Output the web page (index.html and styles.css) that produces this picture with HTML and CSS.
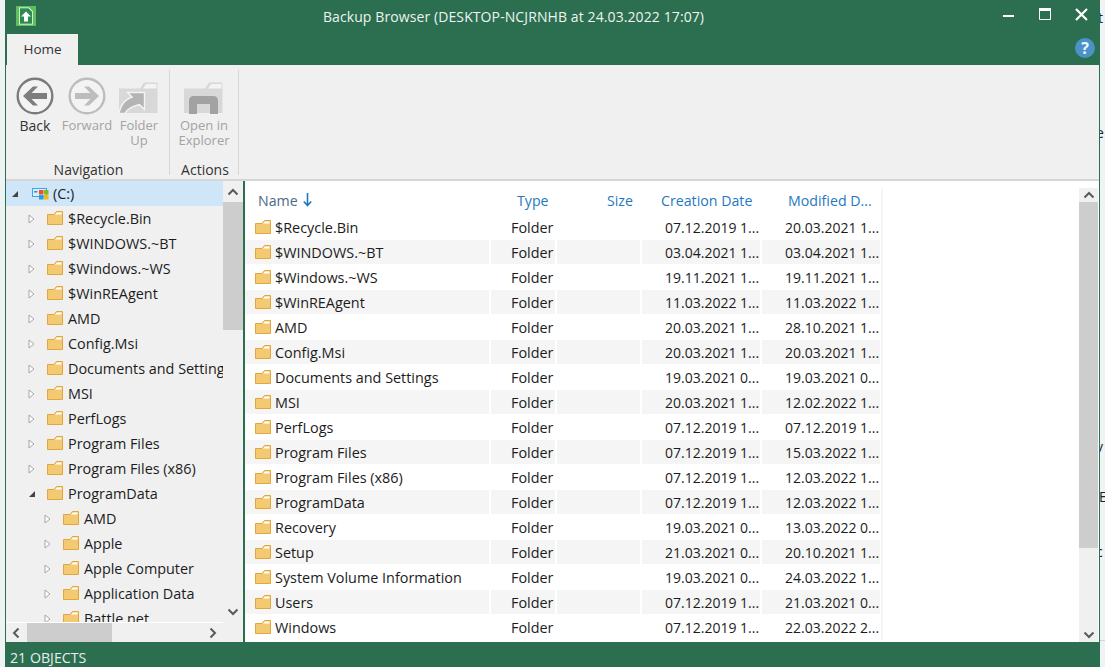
FILE: index.html
```html
<!DOCTYPE html>
<html lang="en">
<head>
<meta charset="utf-8">
<title>Backup Browser</title>
<link rel="stylesheet" href="styles.css">
</head>
<body>
<svg class="defs" width="0" height="0" aria-hidden="true">
  <symbol id="folder" viewBox="0 0 16 14">
    <path d="M.5 3.500V13.500H15.500V.5H9.500L7 3.500Z" fill="#f3ca72" stroke="#e2a63c"/>
    <path d="M8 3.500 10 1.500H14.500V3.500Z" fill="#fff" stroke="none"/>
  </symbol>
  <symbol id="tri" viewBox="0 0 7 10">
    <path d="M1 1 6 5 1 9Z" fill="#fff" stroke="#a6a6a6"/>
  </symbol>
  <symbol id="tri-open" viewBox="0 0 8 8">
    <path d="M7 1V7H1Z" fill="#444"/>
  </symbol>
</svg>
<div class="window">
  <header class="titlebar">
    <svg class="app-icon" viewBox="0 0 20 20" width="20" height="20">
      <rect width="20" height="20" fill="#5bc158"/>
      <path d="M3 1.500H13L17 5.500V18.500H3Z" fill="#fff"/>
      <path d="M3.800 2.300H12.600L16.200 5.900V17.700H3.800Z" fill="#2e8a52"/>
      <path d="M10 5.500 15 10.500H12V15.500H8V10.500H5Z" fill="#fff"/>
    </svg>
    <div class="title">Backup Browser (DESKTOP-NCJRNHB at 24.03.2022 17:07)</div>
    <div class="win-buttons">
      <svg class="win-btn win-min" width="11" height="4" viewBox="0 0 11 4"><rect y="1" width="11" height="2" fill="#fff"/></svg>
      <svg class="win-btn" width="13" height="13" viewBox="0 0 13 13"><path d="M.5.5H11.500V11.500H.5Z" fill="none" stroke="#fff"/><rect x="0" y="0" width="12" height="3" fill="#fff"/></svg>
      <svg class="win-btn" width="13" height="13" viewBox="0 0 13 13"><path d="M1 1 12 12M12 1 1 12" stroke="#fff" stroke-width="2.200"/></svg>
    </div>
  </header>
  <div class="tabbar">
    <div class="tab">Home</div>
    <div class="help">?</div>
  </div>
  <section class="ribbon">
    <div class="group group-nav">
      <div class="group-items">
        <div class="rbtn rbtn-back">
          <svg width="38" height="38" viewBox="0 0 38 38"><circle cx="19" cy="19" r="17.300" fill="#f3f3f3" stroke="#7b7b7b" stroke-width="2.400"/><path d="M7 19 17 9.500H22L15.500 16H31V22H15.500L22 28.500H17Z" fill="#7d7d7d"/></svg>
          <span>Back</span>
        </div>
        <div class="rbtn rbtn-fwd off">
          <svg width="38" height="38" viewBox="0 0 38 38"><circle cx="19" cy="19" r="17.300" fill="#f3f3f3" stroke="#bdbdbd" stroke-width="2.400"/><path d="M31 19 21 9.500H16L22.500 16H7V22H22.500L16 28.500H21Z" fill="#bdbdbd"/></svg>
          <span>Forward</span>
        </div>
        <div class="rbtn rbtn-up off">
          <svg width="40" height="32" viewBox="0 0 40 32"><path d="M0 6.500H21L25 .5H38.500V31H0Z" fill="#d8d8d8"/><path d="M24 6.500 27 2H37.500V6.500Z" fill="#f3f3f3"/><path d="M0 30.500C2 22 7 17 13 15L8.500 10.500H25.500V27.500L20.500 22.500C14 24 8 27 6 31.500H0Z" fill="#b4b4b4" stroke="#f4f4f4" stroke-width="1.400"/></svg>
          <span>Folder<br>Up</span>
        </div>
      </div>
      <div class="group-label">Navigation</div>
    </div>
    <div class="group group-act">
      <div class="group-items">
        <div class="rbtn rbtn-open off">
          <svg width="40" height="32" viewBox="0 0 40 32"><path d="M0 6.500H21L25 .5H38.500V31H0Z" fill="#d8d8d8"/><path d="M24 6.500 27 2H37.500V6.500Z" fill="#f3f3f3"/><path d="M5 32V19Q5 14 10 14H29Q34 14 34 19V32H26V22H13V32Z" fill="#a2a2a2"/></svg>
          <span>Open in<br>Explorer</span>
        </div>
      </div>
      <div class="group-label">Actions</div>
    </div>
    <div class="group group-rest"></div>
  </section>
  <main class="panes">
    <aside class="treepane">
      <div class="treecol">
        <div class="tree">
          <div class="node sel"><svg class="arrow" width="8" height="8"><use href="#tri-open"/></svg><svg class="drive" width="17" height="12" viewBox="0 0 17 12"><rect x=".5" y=".5" width="14" height="8" fill="#d8eefb" stroke="#4aa3dc"/><rect x="2" y="3" width="3.500" height="1.500" fill="#3c8fcb"/><rect x="7" y="2" width="4.500" height="4.500" fill="#e8542c"/><rect x="12" y="2" width="4.500" height="4.500" fill="#7fba2a"/><rect x="7" y="7" width="4.500" height="4.500" fill="#2d9be0"/><rect x="12" y="7" width="4.500" height="4.500" fill="#f7b91a"/></svg><span>(C:)</span></div>
          <div class="node lv1"><svg class="arrow" width="7" height="10"><use href="#tri"/></svg><svg class="ficon" width="16" height="14"><use href="#folder"/></svg><span>$Recycle.Bin</span></div>
          <div class="node lv1"><svg class="arrow" width="7" height="10"><use href="#tri"/></svg><svg class="ficon" width="16" height="14"><use href="#folder"/></svg><span>$WINDOWS.~BT</span></div>
          <div class="node lv1"><svg class="arrow" width="7" height="10"><use href="#tri"/></svg><svg class="ficon" width="16" height="14"><use href="#folder"/></svg><span>$Windows.~WS</span></div>
          <div class="node lv1"><svg class="arrow" width="7" height="10"><use href="#tri"/></svg><svg class="ficon" width="16" height="14"><use href="#folder"/></svg><span>$WinREAgent</span></div>
          <div class="node lv1"><svg class="arrow" width="7" height="10"><use href="#tri"/></svg><svg class="ficon" width="16" height="14"><use href="#folder"/></svg><span>AMD</span></div>
          <div class="node lv1"><svg class="arrow" width="7" height="10"><use href="#tri"/></svg><svg class="ficon" width="16" height="14"><use href="#folder"/></svg><span>Config.Msi</span></div>
          <div class="node lv1"><svg class="arrow" width="7" height="10"><use href="#tri"/></svg><svg class="ficon" width="16" height="14"><use href="#folder"/></svg><span>Documents and Settings</span></div>
          <div class="node lv1"><svg class="arrow" width="7" height="10"><use href="#tri"/></svg><svg class="ficon" width="16" height="14"><use href="#folder"/></svg><span>MSI</span></div>
          <div class="node lv1"><svg class="arrow" width="7" height="10"><use href="#tri"/></svg><svg class="ficon" width="16" height="14"><use href="#folder"/></svg><span>PerfLogs</span></div>
          <div class="node lv1"><svg class="arrow" width="7" height="10"><use href="#tri"/></svg><svg class="ficon" width="16" height="14"><use href="#folder"/></svg><span>Program Files</span></div>
          <div class="node lv1"><svg class="arrow" width="7" height="10"><use href="#tri"/></svg><svg class="ficon" width="16" height="14"><use href="#folder"/></svg><span>Program Files (x86)</span></div>
          <div class="node lv1 open"><svg class="arrow" width="8" height="8"><use href="#tri-open"/></svg><svg class="ficon" width="16" height="14"><use href="#folder"/></svg><span>ProgramData</span></div>
          <div class="node lv2"><svg class="arrow" width="7" height="10"><use href="#tri"/></svg><svg class="ficon" width="16" height="14"><use href="#folder"/></svg><span>AMD</span></div>
          <div class="node lv2"><svg class="arrow" width="7" height="10"><use href="#tri"/></svg><svg class="ficon" width="16" height="14"><use href="#folder"/></svg><span>Apple</span></div>
          <div class="node lv2"><svg class="arrow" width="7" height="10"><use href="#tri"/></svg><svg class="ficon" width="16" height="14"><use href="#folder"/></svg><span>Apple Computer</span></div>
          <div class="node lv2"><svg class="arrow" width="7" height="10"><use href="#tri"/></svg><svg class="ficon" width="16" height="14"><use href="#folder"/></svg><span>Application Data</span></div>
          <div class="node lv2"><svg class="arrow" width="7" height="10"><use href="#tri"/></svg><svg class="ficon" width="16" height="14"><use href="#folder"/></svg><span>Battle.net</span></div>
        </div>
        <div class="hscroll">
          <svg class="chev" width="10" height="12" viewBox="0 0 10 12"><path d="M7.500 1.500 3 6 7.500 10.500" fill="none" stroke="#5a5a5a" stroke-width="2"/></svg>
          <div class="hthumb"></div>
          <svg class="chev chev-right" width="10" height="12" viewBox="0 0 10 12"><path d="M2.500 1.500 7 6 2.500 10.500" fill="none" stroke="#5a5a5a" stroke-width="2"/></svg>
        </div>
      </div>
      <div class="vscroll tree-v">
        <div class="sb-btn"><svg width="12" height="8" viewBox="0 0 12 8"><path d="M1.500 6.500 6 2 10.500 6.500" fill="none" stroke="#5a5a5a" stroke-width="2"/></svg></div>
        <div class="thumb tree-thumb"></div>
        <div class="sb-fill"></div>
        <div class="sb-btn"><svg width="12" height="8" viewBox="0 0 12 8"><path d="M1.500 1.500 6 6 10.500 1.500" fill="none" stroke="#5a5a5a" stroke-width="2"/></svg></div>
        <div class="corner"></div>
      </div>
    </aside>
    <section class="listpane">
      <div class="list">
        <div class="lrow lhead">
          <div class="hname">Name <svg width="9" height="14" viewBox="0 0 9 14"><path d="M4.500 0V12M.8 8.500 4.500 12.500 8.200 8.500" fill="none" stroke="#1f78c1" stroke-width="1.600"/></svg></div>
          <div class="htype">Type</div>
          <div class="hsize">Size</div>
          <div class="hcreated">Creation Date</div>
          <div class="hmod">Modified D...</div>
        </div>
        <div class="lrow"><div class="cname"><svg width="16" height="14"><use href="#folder"/></svg><span>$Recycle.Bin</span></div><div class="ctype">Folder</div><div class="csize"></div><div class="cdate">07.12.2019 1...</div><div class="cdate">20.03.2021 1...</div></div>
        <div class="lrow"><div class="cname"><svg width="16" height="14"><use href="#folder"/></svg><span>$WINDOWS.~BT</span></div><div class="ctype">Folder</div><div class="csize"></div><div class="cdate">03.04.2021 1...</div><div class="cdate">03.04.2021 1...</div></div>
        <div class="lrow"><div class="cname"><svg width="16" height="14"><use href="#folder"/></svg><span>$Windows.~WS</span></div><div class="ctype">Folder</div><div class="csize"></div><div class="cdate">19.11.2021 1...</div><div class="cdate">19.11.2021 1...</div></div>
        <div class="lrow"><div class="cname"><svg width="16" height="14"><use href="#folder"/></svg><span>$WinREAgent</span></div><div class="ctype">Folder</div><div class="csize"></div><div class="cdate">11.03.2022 1...</div><div class="cdate">11.03.2022 1...</div></div>
        <div class="lrow"><div class="cname"><svg width="16" height="14"><use href="#folder"/></svg><span>AMD</span></div><div class="ctype">Folder</div><div class="csize"></div><div class="cdate">20.03.2021 1...</div><div class="cdate">28.10.2021 1...</div></div>
        <div class="lrow"><div class="cname"><svg width="16" height="14"><use href="#folder"/></svg><span>Config.Msi</span></div><div class="ctype">Folder</div><div class="csize"></div><div class="cdate">20.03.2021 1...</div><div class="cdate">20.03.2021 1...</div></div>
        <div class="lrow"><div class="cname"><svg width="16" height="14"><use href="#folder"/></svg><span>Documents and Settings</span></div><div class="ctype">Folder</div><div class="csize"></div><div class="cdate">19.03.2021 0...</div><div class="cdate">19.03.2021 0...</div></div>
        <div class="lrow"><div class="cname"><svg width="16" height="14"><use href="#folder"/></svg><span>MSI</span></div><div class="ctype">Folder</div><div class="csize"></div><div class="cdate">20.03.2021 1...</div><div class="cdate">12.02.2022 1...</div></div>
        <div class="lrow"><div class="cname"><svg width="16" height="14"><use href="#folder"/></svg><span>PerfLogs</span></div><div class="ctype">Folder</div><div class="csize"></div><div class="cdate">07.12.2019 1...</div><div class="cdate">07.12.2019 1...</div></div>
        <div class="lrow"><div class="cname"><svg width="16" height="14"><use href="#folder"/></svg><span>Program Files</span></div><div class="ctype">Folder</div><div class="csize"></div><div class="cdate">07.12.2019 1...</div><div class="cdate">15.03.2022 1...</div></div>
        <div class="lrow"><div class="cname"><svg width="16" height="14"><use href="#folder"/></svg><span>Program Files (x86)</span></div><div class="ctype">Folder</div><div class="csize"></div><div class="cdate">07.12.2019 1...</div><div class="cdate">12.03.2022 1...</div></div>
        <div class="lrow"><div class="cname"><svg width="16" height="14"><use href="#folder"/></svg><span>ProgramData</span></div><div class="ctype">Folder</div><div class="csize"></div><div class="cdate">07.12.2019 1...</div><div class="cdate">12.03.2022 1...</div></div>
        <div class="lrow"><div class="cname"><svg width="16" height="14"><use href="#folder"/></svg><span>Recovery</span></div><div class="ctype">Folder</div><div class="csize"></div><div class="cdate">19.03.2021 0...</div><div class="cdate">13.03.2022 0...</div></div>
        <div class="lrow"><div class="cname"><svg width="16" height="14"><use href="#folder"/></svg><span>Setup</span></div><div class="ctype">Folder</div><div class="csize"></div><div class="cdate">21.03.2021 0...</div><div class="cdate">20.10.2021 1...</div></div>
        <div class="lrow"><div class="cname"><svg width="16" height="14"><use href="#folder"/></svg><span>System Volume Information</span></div><div class="ctype">Folder</div><div class="csize"></div><div class="cdate">19.03.2021 0...</div><div class="cdate">24.03.2022 1...</div></div>
        <div class="lrow"><div class="cname"><svg width="16" height="14"><use href="#folder"/></svg><span>Users</span></div><div class="ctype">Folder</div><div class="csize"></div><div class="cdate">07.12.2019 1...</div><div class="cdate">21.03.2021 0...</div></div>
        <div class="lrow"><div class="cname"><svg width="16" height="14"><use href="#folder"/></svg><span>Windows</span></div><div class="ctype">Folder</div><div class="csize"></div><div class="cdate">07.12.2019 1...</div><div class="cdate">22.03.2022 2...</div></div>
      </div>
      <div class="vscroll list-v">
        <div class="sb-btn"><svg width="12" height="8" viewBox="0 0 12 8"><path d="M1.500 6.500 6 2 10.500 6.500" fill="none" stroke="#5a5a5a" stroke-width="2"/></svg></div>
        <div class="thumb list-thumb"></div>
        <div class="sb-fill"></div>
        <div class="sb-btn"><svg width="12" height="8" viewBox="0 0 12 8"><path d="M1.500 1.500 6 6 10.500 1.500" fill="none" stroke="#5a5a5a" stroke-width="2"/></svg></div>
      </div>
    </section>
  </main>
  <footer class="status">21 OBJECTS</footer>
</div>
<div class="behind">
  <span class="peek p1">t</span>
  <span class="peek p2">e</span>
  <span class="peek p3">v</span>
  <span class="peek p4">E</span>
  <span class="peek p5">c</span>
  <span class="peek-line"></span>
</div>
</body>
</html>
```
FILE: styles.css
```css
* { box-sizing: border-box; }
html, body { margin: 0; height: 100%; overflow: hidden; }
body {
  background: #eef4f3;
  font-family: "Open Sans", "Noto Sans", sans-serif;
  font-size: 14.4px;
  color: #1c1c1c;
  display: flex;
}
.defs { position: absolute; width: 0; height: 0; }
.window {
  flex: none;
  width: 1095px;
  height: 667px;
  margin-left: 5px;
  border-left: 1px solid #2b6e50;
  border-right: 1px solid #2b6e50;
  display: flex;
  flex-direction: column;
  background: #fff;
}
.behind {
  flex: 1;
  min-width: 0;
  overflow: hidden;
  display: flex;
  flex-direction: column;
  font-size: 14px;
  line-height: 18px;
  color: #222;
}
.peek { height: 18px; flex: none; margin-left: -2px; }
.p1 { margin-top: 9px; }
.p2 { margin-top: 97px; margin-left: -4px; }
.p3 { margin-top: 296px; margin-left: -4px; }
.p4 { margin-top: 32px; margin-left: -1px; }
.p5 { margin-top: 37px; margin-left: -4px; }
.peek-line { height: 1px; background: #cfd6d4; margin-top: 79px; flex: none; }
.titlebar {
  height: 34px;
  background: #2b6e50;
  display: flex;
  align-items: flex-start;
  color: #fff;
}
.app-icon { margin: 6px 0 0 10px; flex: none; }
.title {
  flex: 1;
  text-align: center;
  padding: 6px 0 0 0;
  font-size: 14px;
  color: #eef4f1;
  margin-left: -12px;
  line-height: 21px;
  letter-spacing: .1px;
}
.win-buttons { display: flex; align-items: center; height: 28px; padding-right: 11px; gap: 23px; }
.win-min { margin-top: 4px; margin-right: 2px; }
.tabbar {
  height: 31px;
  background: #2b6e50;
  display: flex;
  justify-content: space-between;
  padding: 0 4px 0 1px;
}
.tab {
  width: 71px;
  background: #f0f0f0;
  text-align: center;
  line-height: 30px;
  font-size: 13.5px;
  color: #333;
}
.help {
  width: 20px;
  height: 20px;
  margin-top: 4px;
  border-radius: 50%;
  background: #4a92c8;
  color: #f2f7fb;
  font-weight: 700;
  font-size: 16px;
  line-height: 20px;
  text-align: center;
}
.ribbon {
  height: 116px;
  background: #f0f0f0;
  border-bottom: 2px solid #d6d6d6;
  display: flex;
  padding-top: 5px;
}
.group { display: flex; flex-direction: column; height: 105px; border-right: 1px solid #d6d6d6; }
.group-nav { width: 164px; }
.group-act { width: 69px; }
.group-rest { flex: 1; border-right: 0; }
.group-items { flex: 1; display: flex; }
.group-label { text-align: center; font-size: 14px; line-height: 25px; color: #333; height: 18px; padding-left: 2px; }
.rbtn {
  display: flex;
  flex-direction: column;
  align-items: center;
  font-size: 13px;
  line-height: 15px;
  text-align: center;
  color: #333;
  width: 52px;
}
.rbtn svg { display: block; height: 38px; margin-top: 7px; margin-bottom: 3px; }
.rbtn-up svg, .rbtn-open svg { margin-top: 12px; height: 32px; margin-bottom: 4px; }
.off { color: #a3a3a3; }
.rbtn-back { margin-left: 3px; font-size: 14px; }
.rbtn-open { width: 68px; }
.panes { flex: 1; display: flex; min-height: 0; }
.treepane { width: 239px; flex: none; display: flex; background: #f0f0f0; border-right: 2px solid #2b6e50; }
.treecol { flex: 1; min-width: 0; display: flex; flex-direction: column; }
.tree { height: 441px; overflow: hidden; }
.node {
  height: 25px;
  display: flex;
  align-items: center;
  white-space: nowrap;
}
.node span { margin-top: -1px; }
.node.sel { background: #cfe5f8; }
.arrow { flex: none; margin-left: 22px; margin-right: 12px; }
.open .arrow { margin-right: 11px; }
.sel .arrow { margin-left: 5px; margin-right: 13px; }
.drive { flex: none; margin-right: 4px; }
.ficon { flex: none; margin-right: 5px; margin-top: -2px; }
.lv2 { padding-left: 16px; }
.hscroll { height: 20px; display: flex; align-items: center; border-top: 1px solid #fff; }
.chev { flex: none; margin-left: 5px; }
.hthumb { width: 85px; height: 19px; background: #cdcdcd; margin-left: 6px; }
.chev-right { margin-left: auto; margin-right: 5px; }
.vscroll { display: flex; flex-direction: column; background: #f0f0f0; flex: none; }
.tree-v { width: 20px; }
.sb-btn { height: 21px; display: flex; align-items: center; justify-content: center; flex: none; }
.thumb { background: #cdcdcd; flex: none; }
.tree-thumb { height: 128px; }
.sb-fill { flex: 1; }
.corner { height: 20px; background: #f0f0f0; flex: none; }
.listpane { flex: 1; min-width: 0; display: flex; background: #fff; }
.list { flex: 1; min-width: 0; overflow: hidden; }
.lrow {
  display: grid;
  grid-template-columns: 244px 64px 83px 118px 118px;
  column-gap: 2px;
  height: 25px;
  align-items: stretch;
  width: 638px;
  border-right: 2px solid #f6f6f6;
}
.lrow > div { display: flex; align-items: center; height: 24px; white-space: nowrap; }
.lrow:nth-child(odd):not(.lhead) > div { background: #f5f5f5; }
.lhead { height: 27px; margin-top: 7px; color: #1f78c1; font-size: 14.2px; }
.lhead > div { height: 24px; }
.hname { padding-left: 13px; color: #4a6a85; gap: 5px; }
.htype { padding-left: 26px; }
.hsize { padding-left: 50px; }
.hcreated { padding-left: 19px; }
.hmod { padding-left: 26px; }
.cname { padding-left: 10px; gap: 4px; }
.ctype { padding-left: 20px; }
.cdate { padding-left: 23px; font-size: 14px; }
.list-v { width: 19px; margin-top: 7px; margin-right: 1px; }
.list-thumb { height: 346px; }
.list-v .sb-btn { height: 14px; }
.status {
  height: 25px;
  background: #2b6e50;
  color: #e6efea;
  font-size: 14.2px;
  line-height: 31px;
  padding-left: 4px;
}
```
